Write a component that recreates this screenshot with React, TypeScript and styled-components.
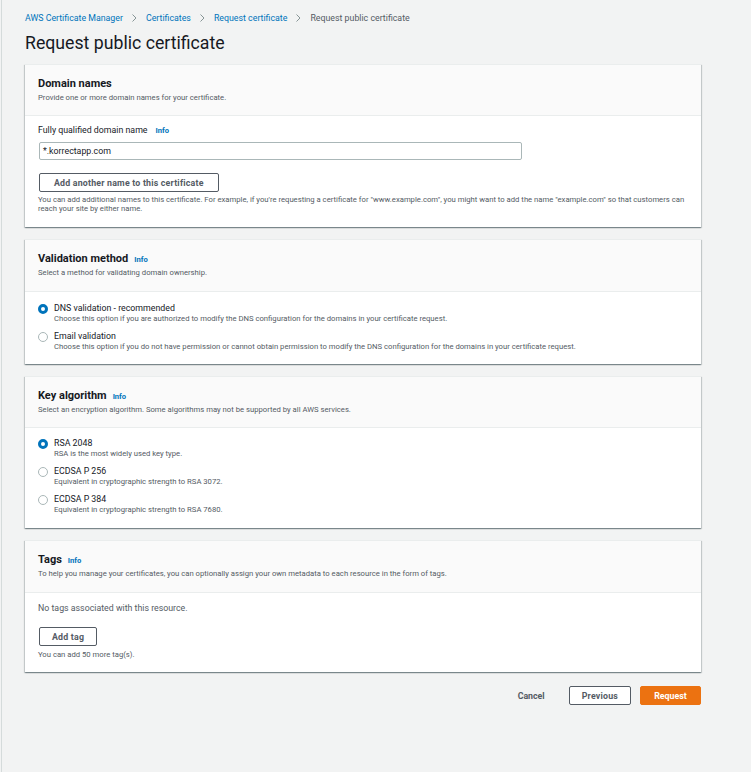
import React from "react";
import styled, { createGlobalStyle } from "styled-components";

const Global = createGlobalStyle`
  html, body { margin: 0; padding: 0; background: #f2f3f3; }
  body { font-family: Roboto, "Liberation Sans", sans-serif; color: #16191f; }
  * { box-sizing: border-box; }
`;

const Page = styled.div`
  min-height: 772px;
  margin-left: 1px;
  border-left: 1px solid #d5dbdb;
  padding: 11px 0 0 23px;
`;

const Content = styled.div`
  width: 676px;
`;

const Crumbs = styled.nav`
  display: flex;
  align-items: center;
  gap: 8px;
  font-size: 8.8px;
  line-height: 14px;
  height: 14px;
`;

const Crumb = styled.span<{ $current?: boolean }>`
  color: ${(p) => (p.$current ? "#545b64" : "#0073bb")};
`;

const Sep = styled.svg`
  width: 7px;
  height: 8px;
  color: #879596;
`;

const Title = styled.h1`
  margin: 7px 0 0;
  font-size: 17.7px;
  font-weight: 400;
  line-height: 22px;
  color: #16191f;
`;

const Panel = styled.section<{ $first?: boolean }>`
  margin-top: ${(p) => (p.$first ? 10 : 12)}px;
  background: #fff;
  border-top: 1px solid #eaeded;
  box-shadow: 0 1px 1px 0 rgba(0, 28, 36, 0.3), 1px 1px 1px 0 rgba(0, 28, 36, 0.15),
    -1px 1px 1px 0 rgba(0, 28, 36, 0.15);
`;

const PanelHeader = styled.div<{ $bottom?: number }>`
  background: #fafafa;
  border-bottom: 1px solid #eaeded;
  padding: 11px 13px ${(p) => p.$bottom ?? 11}px;
`;

const PanelTitle = styled.h2`
  margin: 0;
  display: flex;
  align-items: baseline;
  gap: 6px;
  height: 15px;
  font-size: 11px;
  font-weight: 700;
  line-height: 15px;
  color: #16191f;
`;

const InfoLink = styled.span`
  font-size: 7.6px;
  font-weight: 700;
  color: #0073bb;
`;

const PanelDesc = styled.p`
  margin: 1px 0 0;
  font-size: 7.7px;
  line-height: 12px;
  color: #545b64;
`;

const PanelBody = styled.div<{ $top?: number; $bottom?: number }>`
  padding: ${(p) => p.$top ?? 11}px 13px ${(p) => p.$bottom ?? 12}px;
`;

const Label = styled.div`
  display: flex;
  align-items: baseline;
  gap: 8px;
  font-size: 8.8px;
  line-height: 11px;
  color: #16191f;
`;

const Input = styled.div`
  margin-top: 6px;
  margin-left: 1px;
  width: 483px;
  height: 18px;
  border: 1px solid #aab7b8;
  border-radius: 2px;
  padding: 0 3px;
  display: flex;
  align-items: center;
  font-size: 8.8px;
  color: #16191f;
`;

const OutlineButton = styled.button<{ $top?: number; $pad?: number }>`
  margin-top: ${(p) => p.$top ?? 0}px;
  margin-left: 1px;
  height: 19px;
  padding: 0 ${(p) => p.$pad ?? 12}px;
  background: #fff;
  border: 1px solid #545b64;
  border-radius: 2px;
  font-family: inherit;
  font-size: 8.8px;
  font-weight: 700;
  color: #545b64;
  display: inline-flex;
  align-items: center;
  justify-content: center;
  letter-spacing: 0.2px;
`;

const Help = styled.p<{ $top?: number }>`
  margin: ${(p) => p.$top ?? 3}px 0 0;
  font-size: 7.7px;
  line-height: 9px;
  color: #545b64;
`;

const Plain = styled.p`
  margin: 0;
  font-size: 8.8px;
  line-height: 11px;
  color: #545b64;
`;

const Options = styled.div`
  display: flex;
  flex-direction: column;
  gap: 7px;
`;

const Option = styled.div`
  display: grid;
  grid-template-columns: 10px 1fr;
  column-gap: 6px;
`;

const Radio = styled.span<{ $checked?: boolean }>`
  margin-top: 1px;
  width: 10px;
  height: 10px;
  border-radius: 50%;
  background: #fff;
  border: ${(p) => (p.$checked ? "3px solid #0073bb" : "1px solid #aab7b8")};
`;

const OptionLabel = styled.div`
  font-size: 8.8px;
  line-height: 11px;
  color: #16191f;
`;

const OptionDesc = styled.div`
  grid-column: 2;
  font-size: 7.7px;
  line-height: 10px;
  color: #545b64;
`;

const Footer = styled.div`
  margin-top: 14px;
  display: flex;
  justify-content: flex-end;
  align-items: center;
  gap: 9px;
`;

const TextButton = styled.button`
  background: none;
  border: none;
  font-family: inherit;
  font-size: 8.8px;
  font-weight: 700;
  color: #545b64;
  padding: 0 12px;
  height: 19px;
  margin-right: 2px;
`;

const PrimaryButton = styled.button`
  height: 19px;
  width: 61px;
  background: #ec7211;
  border: 1px solid #ec7211;
  border-radius: 2px;
  font-family: inherit;
  font-size: 8.8px;
  font-weight: 700;
  color: #fff;
`;

const Chevron = () => (
  <Sep viewBox="0 0 7 8">
    <path d="M1.5 0.5 L5 4 L1.5 7.5" fill="none" stroke="currentColor" strokeWidth="1" />
  </Sep>
);

type Opt = { label: string; desc: string; checked?: boolean };

const RadioGroup = ({ options }: { options: Opt[] }) => (
  <Options>
    {options.map((o) => (
      <Option key={o.label}>
        <Radio $checked={o.checked} />
        <OptionLabel>{o.label}</OptionLabel>
        <OptionDesc>{o.desc}</OptionDesc>
      </Option>
    ))}
  </Options>
);

export default function App() {
  return (
    <>
      <Global />
      <Page>
        <Content>
          <Crumbs>
            <Crumb>AWS Certificate Manager</Crumb>
            <Chevron />
            <Crumb>Certificates</Crumb>
            <Chevron />
            <Crumb>Request certificate</Crumb>
            <Chevron />
            <Crumb $current>Request public certificate</Crumb>
          </Crumbs>
          <Title>Request public certificate</Title>

          <Panel $first>
            <PanelHeader>
              <PanelTitle>Domain names</PanelTitle>
              <PanelDesc>Provide one or more domain names for your certificate.</PanelDesc>
            </PanelHeader>
            <PanelBody $top={9} $bottom={14}>
              <Label>
                Fully qualified domain name <InfoLink>Info</InfoLink>
              </Label>
              <Input>*.korrectapp.com</Input>
              <OutlineButton $top={13} $pad={14}>
                Add another name to this certificate
              </OutlineButton>
              <Help>
                You can add additional names to this certificate. For example, if you're requesting a
                certificate for "www.example.com", you might want to add the name "example.com" so that
                customers can reach your site by either name.
              </Help>
            </PanelBody>
          </Panel>

          <Panel>
            <PanelHeader $bottom={12}>
              <PanelTitle>
                Validation method <InfoLink>Info</InfoLink>
              </PanelTitle>
              <PanelDesc>Select a method for validating domain ownership.</PanelDesc>
            </PanelHeader>
            <PanelBody $bottom={12}>
              <RadioGroup
                options={[
                  {
                    label: "DNS validation - recommended",
                    desc: "Choose this option if you are authorized to modify the DNS configuration for the domains in your certificate request.",
                    checked: true,
                  },
                  {
                    label: "Email validation",
                    desc: "Choose this option if you do not have permission or cannot obtain permission to modify the DNS configuration for the domains in your certificate request.",
                  },
                ]}
              />
            </PanelBody>
          </Panel>

          <Panel>
            <PanelHeader>
              <PanelTitle>
                Key algorithm <InfoLink>Info</InfoLink>
              </PanelTitle>
              <PanelDesc>
                Select an encryption algorithm. Some algorithms may not be supported by all AWS services.
              </PanelDesc>
            </PanelHeader>
            <PanelBody $top={10} $bottom={13}>
              <RadioGroup
                options={[
                  { label: "RSA 2048", desc: "RSA is the most widely used key type.", checked: true },
                  { label: "ECDSA P 256", desc: "Equivalent in cryptographic strength to RSA 3072." },
                  { label: "ECDSA P 384", desc: "Equivalent in cryptographic strength to RSA 7680." },
                ]}
              />
            </PanelBody>
          </Panel>

          <Panel>
            <PanelHeader $bottom={12}>
              <PanelTitle>
                Tags <InfoLink>Info</InfoLink>
              </PanelTitle>
              <PanelDesc>
                To help you manage your certificates, you can optionally assign your own metadata to each
                resource in the form of tags.
              </PanelDesc>
            </PanelHeader>
            <PanelBody $top={10} $bottom={13}>
              <Plain>No tags associated with this resource.</Plain>
              <OutlineButton $top={13}>Add tag</OutlineButton>
              <Help $top={4}>You can add 50 more tag(s).</Help>
            </PanelBody>
          </Panel>

          <Footer>
            <TextButton>Cancel</TextButton>
            <OutlineButton>Previous</OutlineButton>
            <PrimaryButton>Request</PrimaryButton>
          </Footer>
        </Content>
      </Page>
    </>
  );
}
